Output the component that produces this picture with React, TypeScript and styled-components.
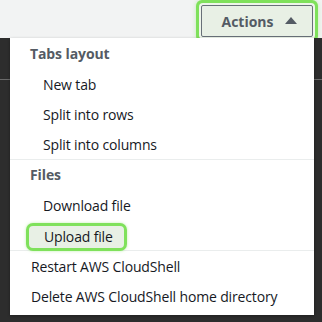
import styled, { createGlobalStyle } from "styled-components";

const GlobalStyle = createGlobalStyle`
  html, body {
    margin: 0;
    padding: 0;
    width: 322px;
    height: 322px;
    overflow: hidden;
    background: #2d2d2d;
    font-family: "Open Sans", "Liberation Sans", sans-serif;
  }
`;

type MenuEntry =
  | { kind: "header"; label: string }
  | { kind: "item"; label: string; nested?: boolean; highlighted?: boolean }
  | { kind: "divider" };

const entries: MenuEntry[] = [
  { kind: "header", label: "Tabs layout" },
  { kind: "item", label: "New tab", nested: true },
  { kind: "item", label: "Split into rows", nested: true },
  { kind: "item", label: "Split into columns", nested: true },
  { kind: "divider" },
  { kind: "header", label: "Files" },
  { kind: "item", label: "Download file", nested: true },
  { kind: "item", label: "Upload file", nested: true, highlighted: true },
  { kind: "divider" },
  { kind: "item", label: "Restart AWS CloudShell" },
  { kind: "item", label: "Delete AWS CloudShell home directory" },
];

export default function App() {
  return (
    <>
      <GlobalStyle />
      <Page>
        <TopBar>
          <ActionsButton>
            Actions
            <Caret />
          </ActionsButton>
        </TopBar>
        <Terminal>
          <TabLine />
          <Menu>
            {entries.map((entry, i) => {
              if (entry.kind === "divider") return <Divider key={i} />;
              if (entry.kind === "header") return <GroupHeader key={i}>{entry.label}</GroupHeader>;
              return (
                <Item key={i} nested={entry.nested}>
                  {entry.highlighted ? <Highlight>{entry.label}</Highlight> : entry.label}
                </Item>
              );
            })}
          </Menu>
        </Terminal>
      </Page>
    </>
  );
}

const Page = styled.div`
  width: 322px;
  height: 322px;
  display: flex;
  flex-direction: column;
`;

const TopBar = styled.div`
  height: 38px;
  background: #f2f3f3;
  display: flex;
  justify-content: flex-end;
  align-items: flex-start;
  padding: 5px 9px 0 0;
  box-sizing: border-box;
`;

const ActionsButton = styled.button`
  height: 32px;
  width: 112px;
  box-sizing: border-box;
  border: 1px solid #687078;
  border-radius: 2px;
  background: #e8f0e5;
  color: #545b64;
  font-family: inherit;
  font-size: 14px;
  font-weight: 700;
  display: flex;
  align-items: center;
  justify-content: center;
  gap: 11px;
  padding: 0 0 0 4px;
  box-shadow: 0 0 0 2px #eef5ea, 0 0 0 5px #7fe15b, 0 0 4px 5px rgba(127, 225, 91, 0.4);
`;

const Caret = styled.span`
  width: 0;
  height: 0;
  border-left: 6px solid transparent;
  border-right: 6px solid transparent;
  border-bottom: 7px solid #545b64;
  margin-bottom: 2px;
`;

const Terminal = styled.div`
  flex: 1;
  position: relative;
  background: #2d2d2d;
`;

const TabLine = styled.div`
  margin-top: 41px;
  height: 1px;
  background: #6b6b6b;
`;

const Menu = styled.div`
  position: absolute;
  top: 0;
  left: 10px;
  width: 304px;
  background: #ffffff;
  padding: 1px 0 4px;
  box-shadow: 0 1px 3px rgba(0, 0, 0, 0.3);
`;

const GroupHeader = styled.div`
  height: 30px;
  line-height: 30px;
  padding-left: 20px;
  font-size: 14px;
  font-weight: 700;
  color: #545b64;
  letter-spacing: -0.1px;
`;

const Item = styled.div<{ nested?: boolean }>`
  height: 30px;
  display: flex;
  align-items: center;
  padding-left: ${(p) => (p.nested ? "33px" : "21px")};
  font-size: 14px;
  letter-spacing: -0.15px;
  color: #16191f;
`;

const Highlight = styled.span`
  margin: 4px 0 0 -17px;
  padding: 1px 11px 2px 15px;
  border: 3px solid #7fe15b;
  border-radius: 7px;
  background: #e8f0e5;
  box-shadow: 0 0 3px rgba(127, 225, 91, 0.5);
`;

const Divider = styled.div`
  height: 1px;
  background: #eaeded;
`;
